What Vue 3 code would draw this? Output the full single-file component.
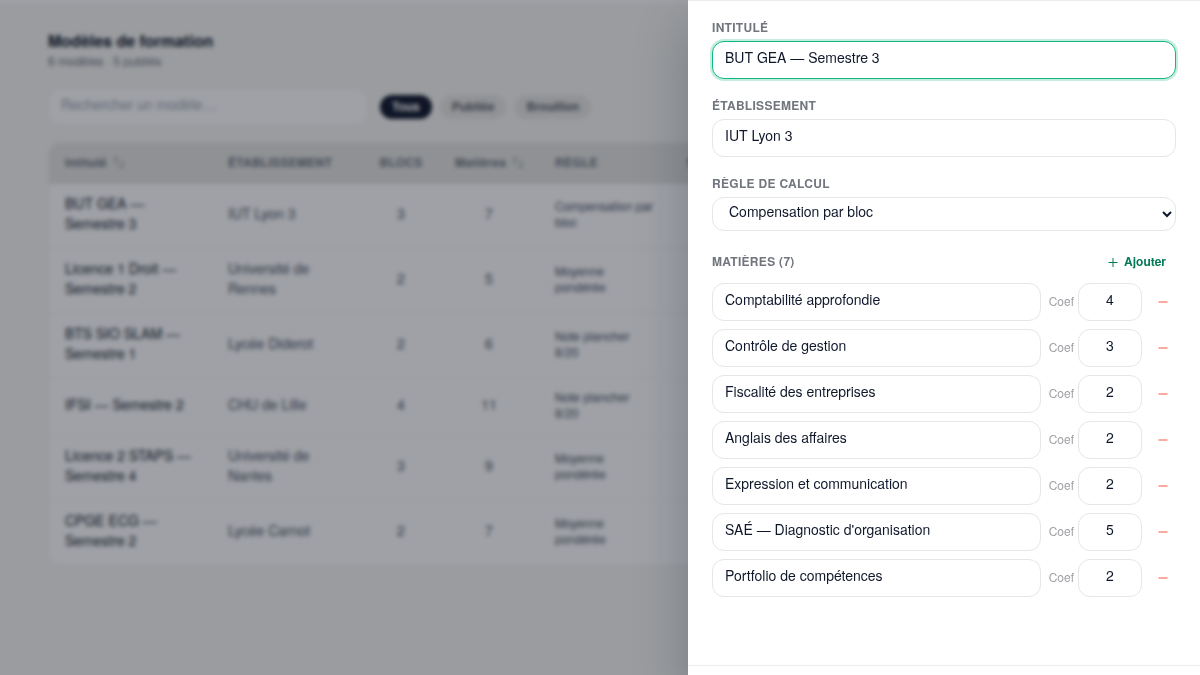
<template>
  <div class="page">
    <header class="topbar"></header>

    <main class="content">
      <h1 class="title">Modèles de formation</h1>
      <p class="subtitle">{{ models.length }} modèles · 5 publiés</p>

      <div class="toolbar">
        <input
          v-model="search"
          type="search"
          class="search"
          placeholder="Rechercher un modèle…"
          aria-label="Rechercher un modèle"
        />
        <div class="chips">
          <button
            v-for="f in filters"
            :key="f"
            type="button"
            class="chip"
            :class="{ active: filter === f }"
            @click="filter = f"
          >
            {{ f }}
          </button>
        </div>
      </div>

      <div class="card">
        <table class="table">
          <colgroup>
            <col class="col-title" />
            <col class="col-school" />
            <col class="col-blocks" />
            <col class="col-subjects" />
            <col class="col-rule" />
            <col />
          </colgroup>
          <thead>
            <tr>
              <th>
                <button type="button" class="sort">
                  Intitulé
                  <svg width="12" height="16" viewBox="0 0 12 16" aria-hidden="true">
                    <path d="M3 11V3M1 5L3 3L5 5M9 6v8M7 12L9 14L11 12" />
                  </svg>
                </button>
              </th>
              <th>Établissement</th>
              <th class="center">Blocs</th>
              <th class="center">
                <button type="button" class="sort">
                  Matières
                  <svg width="12" height="16" viewBox="0 0 12 16" aria-hidden="true">
                    <path d="M3 11V3M1 5L3 3L5 5M9 6v8M7 12L9 14L11 12" />
                  </svg>
                </button>
              </th>
              <th>Règle</th>
              <th>Statut</th>
            </tr>
          </thead>
          <tbody>
            <tr v-for="m in models" :key="m.title">
              <td class="name">{{ m.title }}</td>
              <td class="school">{{ m.school }}</td>
              <td class="center count">{{ m.blocks }}</td>
              <td class="center count">{{ m.subjects }}</td>
              <td class="rule">{{ m.rule }}</td>
              <td></td>
            </tr>
          </tbody>
        </table>
      </div>
    </main>

    <div class="backdrop"></div>

    <aside class="drawer" role="dialog" aria-label="Modifier le modèle">
      <form class="drawer-body" @submit.prevent>
        <div class="field">
          <label for="title" class="label">Intitulé</label>
          <input id="title" v-model="form.title" type="text" class="input focused" />
        </div>

        <div class="field">
          <label for="school" class="label">Établissement</label>
          <input id="school" v-model="form.school" type="text" class="input" />
        </div>

        <div class="field">
          <label for="rule" class="label">Règle de calcul</label>
          <select id="rule" v-model="form.rule" class="select">
            <option v-for="r in rules" :key="r">{{ r }}</option>
          </select>
        </div>

        <section class="subjects">
          <div class="subjects-head">
            <h2 class="label">Matières ({{ form.subjects.length }})</h2>
            <button type="button" class="add" @click="addSubject">
              <svg width="12" height="16" viewBox="0 0 12 16" aria-hidden="true">
                <path d="M5 5v9M0.5 9.5h9" fill="none" stroke="currentColor" stroke-width="1" />
              </svg>
              Ajouter
            </button>
          </div>

          <div v-for="(s, i) in form.subjects" :key="s.id" class="subject">
            <input v-model="s.name" type="text" class="input" aria-label="Matière" />
            <div class="coef">
              <label :for="'coef-' + s.id">Coef</label>
              <input :id="'coef-' + s.id" v-model="s.coef" type="text" inputmode="numeric" class="input" />
            </div>
            <button type="button" class="remove" aria-label="Supprimer" @click="removeSubject(i)">
              <svg width="10" height="10" viewBox="0 0 10 10" aria-hidden="true">
                <path d="M0.5 5h9" fill="none" stroke="currentColor" stroke-width="2" />
              </svg>
            </button>
          </div>
        </section>
      </form>
      <footer class="drawer-footer"></footer>
    </aside>
  </div>
</template>

<script setup>
import { ref, reactive } from 'vue'

const search = ref('')
const filter = ref('Tous')
const filters = ['Tous', 'Publiée', 'Brouillon']

const rules = ['Compensation par bloc', 'Moyenne pondérée', 'Note plancher 8/20']

const models = [
  { title: 'BUT GEA — Semestre 3', school: 'IUT Lyon 3', blocks: 3, subjects: 7, rule: rules[0] },
  { title: 'Licence 1 Droit — Semestre 2', school: 'Université de Rennes', blocks: 2, subjects: 5, rule: rules[1] },
  { title: 'BTS SIO SLAM — Semestre 1', school: 'Lycée Diderot', blocks: 2, subjects: 6, rule: rules[2] },
  { title: 'IFSI — Semestre 2', school: 'CHU de Lille', blocks: 4, subjects: 11, rule: rules[2] },
  { title: 'Licence 2 STAPS — Semestre 4', school: 'Université de Nantes', blocks: 3, subjects: 9, rule: rules[1] },
  { title: 'CPGE ECG — Semestre 2', school: 'Lycée Carnot', blocks: 2, subjects: 7, rule: rules[1] }
]

const form = reactive({
  title: 'BUT GEA — Semestre 3',
  school: 'IUT Lyon 3',
  rule: rules[0],
  subjects: [
    { id: 1, name: 'Comptabilité approfondie', coef: 4 },
    { id: 2, name: 'Contrôle de gestion', coef: 3 },
    { id: 3, name: 'Fiscalité des entreprises', coef: 2 },
    { id: 4, name: 'Anglais des affaires', coef: 2 },
    { id: 5, name: 'Expression et communication', coef: 2 },
    { id: 6, name: "SAÉ — Diagnostic d'organisation", coef: 5 },
    { id: 7, name: 'Portfolio de compétences', coef: 2 }
  ]
})

let nextId = 8

const addSubject = () => {
  form.subjects.push({ id: nextId++, name: '', coef: 1 })
}

const removeSubject = (index) => {
  form.subjects.splice(index, 1)
}
</script>

<style>
body {
  margin: 0;
  background: #f7f7f4;
}
</style>

<style scoped>
.page {
  min-height: 100vh;
  background: #f7f7f4;
  color: #0f172a;
  font-family: "TeX Gyre Heros", "Liberation Sans", Arial, sans-serif;
  font-size: 14px;
  line-height: 20px;
}

.page *,
.page *::before {
  box-sizing: border-box;
}

button,
input,
select {
  font: inherit;
  color: inherit;
  letter-spacing: inherit;
}

button {
  border: none;
  background: none;
  padding: 0;
  cursor: pointer;
}

.topbar {
  height: 5px;
  background: #fff;
  border-bottom: 1px solid #ececec;
}

.content {
  padding: 24px 48px;
}

.title {
  margin: 0;
  font-size: 16px;
  line-height: 24px;
  font-weight: 700;
}

.subtitle {
  margin: 0;
  font-size: 12px;
  line-height: 16px;
  color: #71757e;
}

.toolbar {
  display: flex;
  align-items: center;
  gap: 12px;
  margin: 19px 0 16px;
}

.search {
  width: 320px;
  height: 38px;
  padding: 5px 12px 11px;
  border: 1px solid #ececec;
  border-radius: 12px;
  background: #fff;
  outline: none;
}

.search::placeholder {
  color: #9ca3af;
  opacity: 1;
}

.chips {
  display: flex;
  gap: 8px;
}

.chip {
  padding: 3px 12px 5px;
  border-radius: 12px;
  background: #e8e8e4;
  color: #5f636b;
  font-size: 12px;
  line-height: 16px;
  font-weight: 700;
}

.chip.active {
  background: #0f172a;
  color: #fff;
}

.card {
  overflow: hidden;
  border: 1px solid #ececec;
  border-radius: 12px;
  background: #fff;
}

.table {
  width: 100%;
  table-layout: fixed;
  border-collapse: collapse;
}

.col-title {
  width: 163px;
}

.col-school {
  width: 151px;
}

.col-blocks {
  width: 76px;
}

.col-subjects {
  width: 100px;
}

.col-rule {
  width: 132px;
}

.table th {
  padding: 11px 16px 14px;
  background: #e5e5e1;
  color: #6b7280;
  font-size: 12px;
  line-height: 16px;
  font-weight: 700;
  letter-spacing: 0.025em;
  text-align: left;
  text-transform: uppercase;
  white-space: nowrap;
}

.table td {
  padding: 9px 16px 15px;
  border-bottom: 1px solid #f3f3f3;
}

.table tr:last-child td {
  border-bottom: none;
}

.table .center {
  text-align: center;
}

.sort {
  display: inline-flex;
  gap: 6px;
  vertical-align: top;
}

.sort svg {
  fill: none;
  stroke: #8b9099;
  stroke-width: 1;
}

.name {
  font-weight: 500;
}

.school,
.count {
  color: #475063;
}

.table .rule {
  padding: 10px 16px 14px;
  color: #475063;
  font-size: 12px;
  line-height: 16px;
}

.backdrop {
  position: fixed;
  inset: 0;
  background: rgba(15, 21, 32, 0.4);
  backdrop-filter: blur(2px);
}

.drawer {
  position: fixed;
  top: 0;
  right: 0;
  bottom: 0;
  display: flex;
  flex-direction: column;
  width: 100%;
  max-width: 512px;
  border-top: 1px solid #ececec;
  background: #fff;
  box-shadow: 0 24px 48px rgba(15, 23, 42, 0.25);
}

.drawer-body {
  flex: 1;
  display: flex;
  flex-direction: column;
  gap: 18px;
  overflow-y: auto;
  padding: 18px 24px;
}

.drawer-footer {
  flex: none;
  height: 10px;
  border-top: 1px solid #ececec;
}

.field {
  display: flex;
  flex-direction: column;
  gap: 6px;
}

.label {
  margin: 0;
  color: #71757e;
  font-size: 12px;
  line-height: 16px;
  font-weight: 700;
  letter-spacing: 0.025em;
  text-transform: uppercase;
}

.input {
  width: 100%;
  min-width: 0;
  height: 38px;
  padding: 5px 12px 11px;
  border: 1px solid #e6e6e6;
  border-radius: 12px;
  background: #fff;
  outline: none;
}

.input.focused,
.input:focus {
  border-color: #10b981;
  box-shadow: 0 0 0 2px rgba(16, 185, 129, 0.25);
}

.select {
  width: 100%;
  height: 34px;
  padding: 0 12px 6px;
  border: 1px solid #e6e6e6;
  border-radius: 12px;
  background: #fff;
  outline: none;
}

.subjects {
  display: flex;
  flex-direction: column;
  gap: 8px;
}

.subjects-head {
  display: flex;
  align-items: center;
  justify-content: space-between;
  padding-bottom: 2px;
}

.add {
  display: flex;
  align-items: center;
  gap: 4px;
  padding: 4px 10px;
  color: #047857;
  font-size: 12px;
  line-height: 16px;
  font-weight: 700;
}

.subject {
  display: flex;
  align-items: center;
  gap: 8px;
}

.coef {
  flex: none;
  display: flex;
  align-items: center;
  gap: 4px;
  color: #a0a1a6;
  font-size: 12px;
  line-height: 16px;
}

.coef label {
  padding-bottom: 2px;
}

.coef .input {
  width: 64px;
  color: #0f172a;
  font-size: 14px;
  line-height: 20px;
  text-align: center;
}

.remove {
  flex: none;
  display: flex;
  align-items: center;
  justify-content: center;
  width: 26px;
  height: 26px;
  color: #fbaaa0;
}
</style>
